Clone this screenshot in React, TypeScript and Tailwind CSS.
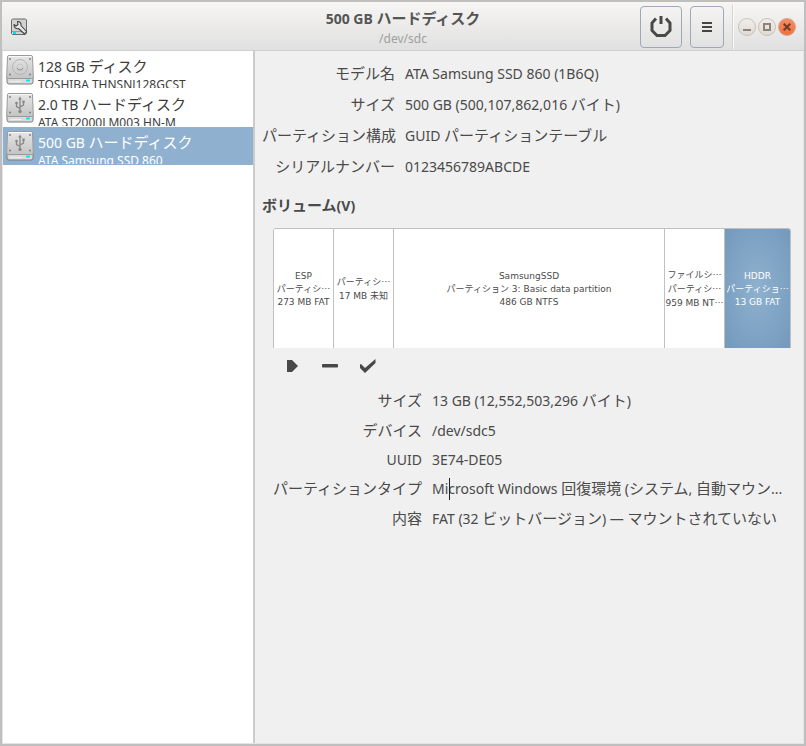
import { Fragment } from "react";
import clsx from "clsx";

type Drive = { name: string; model: string; kind: "disk" | "usb"; selected?: boolean };
type Volume = { lines: string[]; width: string; selected?: boolean };
type Detail = { label: string; value: string; caret?: boolean };

const drives: Drive[] = [
  { name: "128 GB ディスク", model: "TOSHIBA THNSNJ128GCST", kind: "disk" },
  { name: "2.0 TB ハードディスク", model: "ATA ST2000LM003 HN-M", kind: "usb" },
  { name: "500 GB ハードディスク", model: "ATA Samsung SSD 860", kind: "usb", selected: true },
];

const driveDetails: Detail[] = [
  { label: "モデル名", value: "ATA Samsung SSD 860 (1B6Q)" },
  { label: "サイズ", value: "500 GB (500,107,862,016 バイト)" },
  { label: "パーティション構成", value: "GUID パーティションテーブル" },
  { label: "シリアルナンバー", value: "0123456789ABCDE" },
];

const volumes: Volume[] = [
  { lines: ["ESP", "パーティシ…", "273 MB FAT"], width: "w-[60px]" },
  { lines: ["パーティシ…", "17 MB 未知"], width: "w-[60px]" },
  { lines: ["SamsungSSD", "パーティション 3: Basic data partition", "486 GB NTFS"], width: "flex-1" },
  { lines: ["ファイルシ…", "パーティシ…", "959 MB NT…"], width: "w-[60px]" },
  { lines: ["HDDR", "パーティショ…", "13 GB FAT"], width: "w-[66px]", selected: true },
];

const volumeDetails: Detail[] = [
  { label: "サイズ", value: "13 GB (12,552,503,296 バイト)" },
  { label: "デバイス", value: "/dev/sdc5" },
  { label: "UUID", value: "3E74-DE05" },
  { label: "パーティションタイプ", value: "Microsoft Windows 回復環境 (システム, 自動マウン...", caret: true },
  { label: "内容", value: "FAT (32 ビットバージョン) — マウントされていない" },
];

const cjkRun = /([\u3000-\u30ff\u4e00-\u9fff]+)/;

// Japanese runs are set one step larger than the Latin text around them.
function Mixed({ text }: Readonly<{ text: string }>) {
  return (
    <>
      {text.split(cjkRun).map((part, i) =>
        i % 2 === 1 ? (
          <span key={i} className="text-[15px]">{part}</span>
        ) : (
          <Fragment key={i}>{part}</Fragment>
        ),
      )}
    </>
  );
}

function DriveIcon({ kind }: Readonly<{ kind: Drive["kind"] }>) {
  return (
    <svg width="28" height="30" viewBox="0 0 28 30" className="shrink-0" aria-hidden="true">
      <defs>
        <linearGradient id={`plate-${kind}`} x1="0" y1="0" x2="0" y2="1">
          <stop offset="0" stopColor="#e6e6e6" />
          <stop offset="1" stopColor="#c4c4c4" />
        </linearGradient>
      </defs>
      <path d="M1 22h26v5a2 2 0 0 1-2 2H3a2 2 0 0 1-2-2z" fill="#dadada" stroke="#7c7c7c" />
      <path d="M3 .5h22a1.5 1.5 0 0 1 1.5 1.5l.8 20a1.5 1.5 0 0 1-1.5 1.5H2.2A1.5 1.5 0 0 1 .7 22l.8-20A1.5 1.5 0 0 1 3 .5z" fill={`url(#plate-${kind})`} stroke="#9a9a9a" />
      <path d="M2.5 1.5h23" stroke="#f8f8f8" />
      <g fill="#777">
        <circle cx="4" cy="4" r=".9" />
        <circle cx="24" cy="4" r=".9" />
        <circle cx="4" cy="19.5" r=".9" />
        <circle cx="24" cy="19.5" r=".9" />
      </g>
      <path d="M4 26.5h12" stroke="#eee" />
      <rect x="20" y="24.5" width="4" height="2" rx="1" fill="#00e5f0" />
      {kind === "disk" ? (
        <g fill="none" stroke="#b4b4b4">
          <circle cx="14" cy="12" r="7.5" />
          <circle cx="14" cy="12" r="3" stroke="#cacaca" />
          <path d="M11 13a3.2 3.2 0 0 0 6 0" stroke="#909090" />
        </g>
      ) : (
        <g fill="none" stroke="#888" strokeWidth="1.3">
          <path d="M14 6v12M14 15.5l-3.500-2v-3M14 14l3.500-2v-3" />
          <path d="M14 3.500l1.800 3h-3.600z" fill="#888" stroke="none" />
          <circle cx="14" cy="18.5" r="1.7" fill="#888" stroke="none" />
          <circle cx="10.5" cy="10" r="1.3" fill="#888" stroke="none" />
          <rect x="16.3" y="7.5" width="2.4" height="2.4" fill="#888" stroke="none" />
        </g>
      )}
    </svg>
  );
}

function AppIcon() {
  return (
    <svg width="18" height="18" viewBox="0 0 18 18" aria-hidden="true">
      <path d="M2.500 1h13l1 1v13.500l-1 1h-13l-1-1V2z" fill="#d2d2d2" stroke="#6a6a6a" />
      <path d="M2 13.500h14" stroke="#999" />
      <rect x="3" y="14" width="3" height="2" fill="#00e5f0" />
      <path d="M4 6.500l2 1.500 2-1.500-.5-3c2-.3 4 1.500 3.500 4l5.500 6-2 2.500-6-5.500c-2.500.8-4.500-1-4.500-4z" fill="#e6e6e6" stroke="#444" strokeWidth="1.1" strokeLinejoin="round" />
    </svg>
  );
}

function HeaderBar() {
  const windowButton = "flex size-[18px] items-center justify-center rounded-full border";
  return (
    <header className="grid h-[49px] grid-cols-[1fr_auto_1fr] items-center border-b border-[#d0d0d0] bg-linear-to-b from-[#f7f6f4] to-[#e0e0e0]">
      <div className="pt-[2px] pl-2">
        <AppIcon />
      </div>
      <div className="pt-1 text-center">
        <h1 className="text-sm leading-5 font-bold text-[#555]">
          <Mixed text="500 GB ハードディスク" />
        </h1>
        <p className="text-xs leading-5 text-[#a0a09f]">/dev/sdc</p>
      </div>
      <div className="flex items-center justify-end pt-px pr-2">
        <button aria-label="電源を切る" className="flex h-[42px] w-[42px] items-center justify-center rounded border border-[#9da8bf]">
          <svg width="22" height="22" viewBox="0 0 22 22" fill="none" stroke="#484848" strokeWidth="3">
            <path d="M6 2.500L2 7v7.500l5 5h8l5-5V7l-4-4.500" />
            <path d="M11 0v8" />
          </svg>
        </button>
        <button aria-label="メニュー" className="ml-2 flex h-[42px] w-[34px] items-center justify-center rounded border border-[#9da8bf]">
          <svg width="10" height="10" viewBox="0 0 10 10" stroke="#444" strokeWidth="2">
            <path d="M0 1h10M0 5h10M0 9h10" />
          </svg>
        </button>
        <div className="mr-1 ml-2 h-11 w-[2px] border-l border-[#d2d2d2] bg-[#fafafa]" />
        <div className="flex gap-[2px]">
          <button aria-label="最小化" className={clsx(windowButton, "border-[#c8c1b9] bg-linear-to-b from-[#f1eeea] to-[#dfdad4]")}>
            <svg width="8" height="8" viewBox="0 0 8 8"><path d="M0 6h8v2H0z" fill="#8c8478" /></svg>
          </button>
          <button aria-label="最大化" className={clsx(windowButton, "border-[#c8c1b9] bg-linear-to-b from-[#f1eeea] to-[#dfdad4]")}>
            <svg width="8" height="8" viewBox="0 0 8 8"><path d="M1 1h6v6H1z" fill="none" stroke="#8c8478" strokeWidth="2" /></svg>
          </button>
          <button aria-label="閉じる" className={clsx(windowButton, "border-[#d7a58f] bg-linear-to-b from-[#f58d63] to-[#f0703c]")}>
            <svg width="8" height="8" viewBox="0 0 8 8"><path d="M.7.7l6.600 6.600M7.300.7L.7 7.300" stroke="#703a25" strokeWidth="2" /></svg>
          </button>
        </div>
      </div>
    </header>
  );
}

function DriveList() {
  return (
    <nav className="w-[252px] shrink-0 border-r-2 border-[#cbcbcb] bg-white">
      <ul>
        {drives.map((drive) => (
          <li key={drive.name}>
            <button
              className={clsx(
                "flex h-[38px] w-full items-start gap-1 overflow-hidden px-[3px] pt-1 text-left",
                drive.selected ? "bg-[#8fb1cf] text-white" : "text-[#3c3c3c]",
              )}
            >
              <DriveIcon kind={drive.kind} />
              <span className="block h-[33px] overflow-hidden whitespace-nowrap">
                <span className="block h-[22px] text-sm leading-[22px]">
                  <Mixed text={drive.name} />
                </span>
                <span className="block text-xs leading-4">{drive.model}</span>
              </span>
            </button>
          </li>
        ))}
      </ul>
    </nav>
  );
}

function DetailList({ items, columns }: Readonly<{ items: Detail[]; columns: string }>) {
  return (
    <dl className={clsx("grid gap-x-[10px] text-sm text-[#4a4a4a]", columns)}>
      {items.map((item) => (
        <Fragment key={item.label}>
          <dt className={clsx("text-right whitespace-nowrap", item.label === "UUID" ? "leading-[19px]" : "leading-[21px]")}>
            <Mixed text={item.label} />
          </dt>
          <dd className={clsx("relative min-w-0 whitespace-nowrap", item.label === "UUID" ? "leading-[19px]" : "leading-[21px]")}>
            <Mixed text={item.value} />
            {item.caret && <span className="absolute top-0 left-[17px] h-[22px] w-px bg-[#222]" />}
          </dd>
        </Fragment>
      ))}
    </dl>
  );
}

function VolumeLine({ text }: Readonly<{ text: string }>) {
  const hasJapanese = cjkRun.test(text);
  const cut = text.endsWith("…");
  return (
    <span className={clsx("block", hasJapanese || cut ? "leading-[14px]" : "leading-3")}>
      {cut ? text.slice(0, -1) : text}
      {cut && <span className="font-['Noto_Sans_CJK_JP',sans-serif]">…</span>}
    </span>
  );
}

function VolumeGrid() {
  return (
    <div className="flex h-[120px] overflow-hidden rounded-t-[3px] border-t border-r border-[#c0c0c0] bg-white">
      {volumes.map((volume, i) => (
        <button
          key={i}
          className={clsx(
            "flex flex-col items-center justify-center overflow-hidden border-l border-[#c0c0c0] font-['DejaVu_Sans','Noto_Sans_CJK_JP',sans-serif] text-[9px] whitespace-nowrap",
            volume.width,
            volume.selected ? "bg-radial from-[#8fb1cf] to-[#7399bb] text-white" : "text-[#4a4a4a]",
          )}
        >
          {volume.lines.map((line) => (
            <VolumeLine key={line} text={line} />
          ))}
        </button>
      ))}
    </div>
  );
}

function VolumeToolbar() {
  return (
    <div className="flex h-[35px] items-center pl-[6px]">
      <button aria-label="マウント" className="flex h-7 w-[38px] items-center pl-2">
        <svg width="11" height="12" viewBox="0 0 11 12"><path d="M0 0h5l6 6-6 6H0z" fill="#484848" /></svg>
      </button>
      <button aria-label="削除" className="flex h-7 w-[38px] items-center pl-[5px]">
        <svg width="16" height="4" viewBox="0 0 16 4"><rect width="16" height="3.5" rx=".8" fill="#484848" /></svg>
      </button>
      <button aria-label="その他の操作" className="flex h-7 w-[38px] items-center pl-[5px]">
        <svg width="16" height="14" viewBox="0 0 16 14"><path d="M0 5.500l1-.5 4 4L15.500 0v4L5 14 0 9z" fill="#484848" /></svg>
      </button>
    </div>
  );
}

export default function App() {
  return (
    <div className="flex min-h-screen flex-col border-2 border-[#bfbfbf] bg-[#f0f0f0] font-['Noto_Sans','Noto_Sans_CJK_JP',sans-serif]" lang="ja">
      <HeaderBar />
      <div className="flex flex-1 border-x border-b border-[#e4e4e4]">
        <DriveList />
        <main className="min-w-0 flex-1 overflow-hidden pt-3 pr-3 pl-[7px]">
          <DetailList items={driveDetails} columns="grid-cols-[133px_1fr] gap-y-[10px]" />
          <h2 className="mt-[18px] text-sm leading-[21px] font-bold text-[#4a4a4a]">
            <Mixed text="ボリューム(V)" />
          </h2>
          <div className="mt-3 pl-[11px]">
            <VolumeGrid />
            <VolumeToolbar />
            <div className="pt-[7px]">
              <DetailList items={volumeDetails} columns="grid-cols-[149px_1fr] gap-y-[9px]" />
            </div>
          </div>
        </main>
      </div>
    </div>
  );
}
